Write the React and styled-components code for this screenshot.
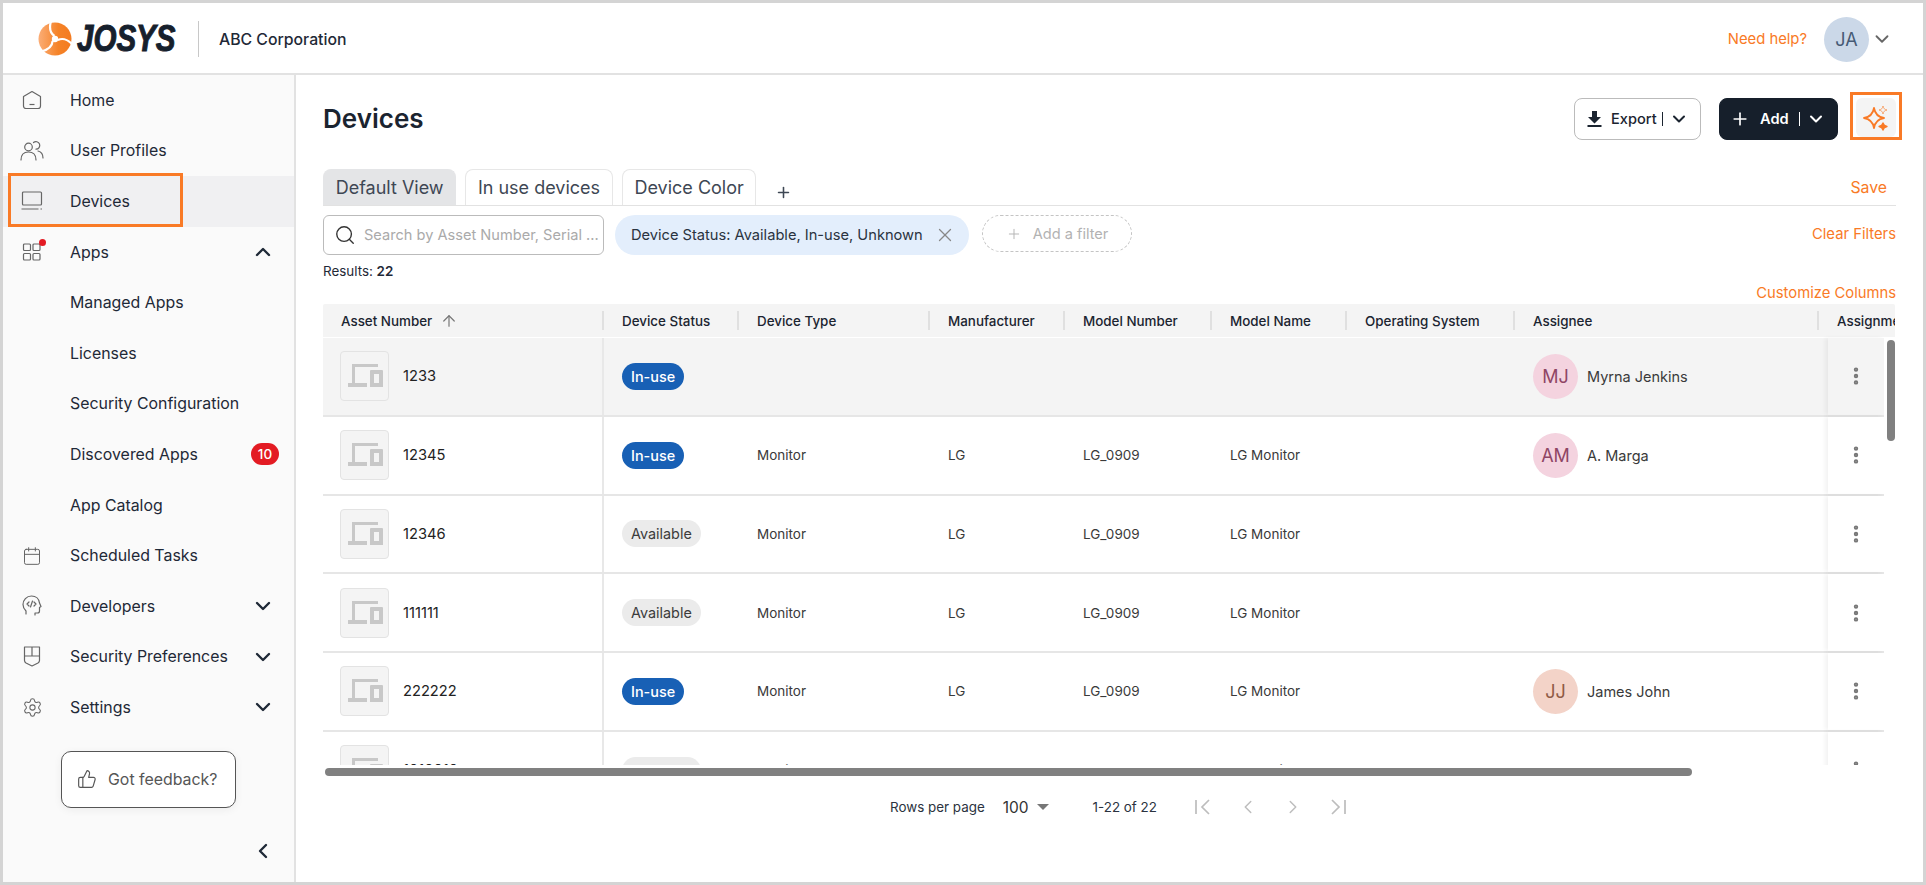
import React from 'react';
import styled, { createGlobalStyle } from 'styled-components';
import { ChevronDown, ChevronUp, ChevronLeft, ChevronRight, Plus, Search, X, ArrowUp, ThumbsUp, Settings, EllipsisVertical, Calendar } from 'lucide-react';

const Global = createGlobalStyle`
  *, *::before, *::after { box-sizing: border-box; }
  html, body { margin: 0; padding: 0; height: 885px; overflow: hidden; background: #fff; }
  body { font-family: Inter, "Noto Sans", sans-serif; color: #1f2937; }
`;
const ORANGE = '#f97a26';

const Frame = styled.div`
  width: 1926px; height: 885px; border: 3px solid #d4d4d4; display: flex; flex-direction: column; background: #fff; overflow: hidden;
`;
const Header = styled.header`
  height: 72px; flex: none; border-bottom: 2px solid #e2e2e2; display: flex; align-items: center; padding: 2px 30px 0 35px;
`;
const LogoMark = styled.svg` width: 34px; height: 34px; flex: none; `;
const LogoWordBox = styled.span` width: 105px; margin-left: 5px; display: block; `;
const LogoWord = styled.span`
  display: inline-block; font: italic 700 36px/1 "Liberation Sans", sans-serif; color: #16202c; -webkit-text-stroke: 1px #16202c;
  transform: scaleX(.82); transform-origin: left center;
`;
const HeaderRule = styled.span` width: 1px; height: 36px; background: #c8c8c8; margin: 0 20px 0 16px; `;
const Company = styled.span` font-size: 15.8px; font-weight: 500; color: #1f2937; `;
const Spacer = styled.div` flex: 1; `;
const Link = styled.a` font-size: ${p => p.$fs || 14.8}px; color: ${ORANGE}; white-space: nowrap; `;
const Circle = styled.div`
  width: 45px; height: 45px; border-radius: 50%; background: ${p => p.$bg}; color: ${p => p.$fg}; flex: none;
  display: flex; align-items: center; justify-content: center; font-size: 18px;
`;
const HeaderUser = styled.div` display: flex; align-items: center; gap: 2px; margin-left: 17px; color: #666; `;

const Body = styled.div` flex: 1; display: flex; min-height: 0; `;
const Side = styled.nav`
  width: 293px; flex: none; background: #fafafa; border-right: 2px solid #e2e2e2; display: flex; flex-direction: column; position: relative;
`;
const NavRow = styled.div`
  height: 50.6px; flex: none; display: flex; align-items: center; position: relative; font-size: 15.9px; color: #1f2937;
  padding: 0 19px 0 17px; background: ${p => p.$active ? '#f0f0f2' : 'transparent'};
  ${p => p.$active && `&::after { content: ''; position: absolute; left: 5px; top: -3px; width: 175px; height: 54px; border: 3px solid ${ORANGE}; }`}
`;
const NavIcon = styled.span` width: 24px; height: 24px; display: flex; align-items: center; justify-content: center; color: #666; margin-right: 26px; flex: none; position: relative; `;
const NavDot = styled.i` position: absolute; right: -2px; top: -1px; width: 7px; height: 7px; border-radius: 50%; background: #e31b23; `;
const NavLabel = styled.span` flex: 1; margin-left: ${p => p.$sub ? '50px' : 0}; white-space: nowrap; `;
const Count = styled.span` width: 28px; height: 22px; border-radius: 11px; background: #e31b23; color: #fff; font-size: 13.5px; font-weight: 500; display: flex; align-items: center; justify-content: center; margin-right: -4px; `;
const Chev = styled.span` color: #1f2937; display: flex; `;
const Feedback = styled.button`
  margin: 18px 0 0 58px; width: 175px; height: 57px; background: #fff; border: 1px solid #555; border-radius: 10px; box-shadow: 0 2px 8px rgba(0,0,0,.06);
  display: flex; align-items: center; gap: 11px; padding: 0 15px; font: 400 15.9px Inter, sans-serif; color: #565656; white-space: nowrap;
`;
const Collapse = styled.div` margin-top: auto; height: 50px; display: flex; justify-content: flex-end; padding: 10px 19px 0 0; color: #1f2937; margin-bottom: 3px; `;

const Main = styled.main` flex: 1; min-width: 0; display: flex; flex-direction: column; padding: 0 27px; position: relative; `;
const TitleRow = styled.div` height: 66px; margin-top: 16px; flex: none; display: flex; align-items: flex-start; `;
const Title = styled.h1` margin: 12px 0 0; font-size: 26px; font-weight: 600; color: #1b2430; `;
const Btn = styled.button`
  height: 42px; margin-top: 7px; border-radius: 8px; display: flex; align-items: center; font: 500 14.6px Inter, sans-serif;
  border: 1px solid ${p => p.$dark ? '#161f2b' : '#bbb'}; background: ${p => p.$dark ? '#161f2b' : '#fff'}; color: ${p => p.$dark ? '#fff' : '#1b2430'};
  width: ${p => p.$w}px; padding: 0 0 0 ${p => p.$pl}px; margin-left: ${p => p.$ml || 0}px; font-weight: ${p => p.$dark ? 600 : 500};
`;
const BtnIcon = styled.span` display: flex; margin-right: ${p => p.$mr}px; `;
const BtnBar = styled.i` width: 1px; height: 14px; background: ${p => p.$dark ? '#fff' : '#1b2430'}; margin: 0 6px 0 ${p => p.$gap}px; `;
const Outline = styled.div` border: 3px solid ${ORANGE}; margin-left: 12px; margin-right: -6px; margin-top: 1px; padding: 3px 3px 0; height: 48px; width: 52px; `;
const AiBtn = styled.div` width: 40px; height: 39px; border-radius: 6px; background: #f4f4f4; display: flex; align-items: center; justify-content: center; `;

const TabRow = styled.div` height: 37px; margin-top: 12px; flex: none; border-bottom: 1px solid #e2e2e2; display: flex; align-items: flex-end; gap: 9px; `;
const Tab = styled.div`
  height: 36px; padding: 0 11.7px; border: 1px solid ${p => p.$on ? '#e4e5e7' : '#e7e7e7'}; border-bottom: none; border-radius: 8px 8px 0 0; font-size: 18px; color: #3e4754;
  background: ${p => p.$on ? '#e4e5e7' : '#fff'}; display: flex; align-items: center; white-space: nowrap;
`;
const TabPlus = styled.span` margin: 0 0 4px 10px; display: flex; color: #3e4754; `;
const SaveLink = styled(Link)` margin-left: auto; margin-right: 9px; margin-bottom: 8px; `;
const FilterRow = styled.div` display: flex; align-items: flex-start; margin-top: 9px; height: 39px; flex: none; `;
const SearchBox = styled.div` width: 281px; height: 40px; border: 1px solid #bbb; border-radius: 6px; display: flex; align-items: center; padding: 0 0 0 10px; gap: 8px; color: #333; `;
const Placeholder = styled.span` font-size: 14.6px; color: #aaa; white-space: nowrap; overflow: hidden; `;
const Chip = styled.div` margin-left: 11px; width: 354px; height: 40px; border-radius: 20px; background: #e3eefc; display: flex; align-items: center; padding: 0 13px 0 16px; font-size: 14.65px; color: #2a3340; white-space: nowrap; justify-content: space-between; `;
const AddFilter = styled.div` margin-left: 13px; width: 150px; height: 37px; border: 1px dashed #c4c4c4; border-radius: 19px; display: flex; align-items: center; justify-content: center; gap: 11px; font-size: 14.6px; color: #b2b2b2; white-space: nowrap; `;
const ClearLink = styled(Link)` margin-left: auto; margin-top: 10px; `;
const Results = styled.div` font-size: 13.4px; margin-top: 9px; height: 18px; color: #1f2937; b { font-weight: 600; } `;
const CustomRow = styled.div` display: flex; justify-content: flex-end; height: 20px; margin-top: 2px; align-items: center; `;

const Table = styled.div` margin-top: 1px; position: relative; height: 461px; flex: none; overflow: hidden; `;
const Row = styled.div`
  display: grid; grid-template-columns: 281px 135px 191px 135px 147px 135px 168px 304px 1fr; width: 1561px;
  height: 78.75px; align-items: center; border-bottom: 2px solid #e6e6e6; background: ${p => p.$hl ? '#f4f4f4' : '#fff'}; position: relative;
`;
const HeadRow = styled(Row)` height: 33px; width: 1572px; border-bottom: none; background: #f4f4f4; margin-bottom: 1px; font-size: 13.4px; font-weight: 500; color: #1b2430; grid-template-columns: 281px 135px 191px 135px 147px 135px 168px 304px 76px; overflow: hidden; border-radius: 2px 2px 0 0; `;
const HeadCell = styled.div`
  padding-left: 18px; height: 100%; display: flex; align-items: center; gap: 8px; white-space: nowrap; position: relative;
  &::after { content: ''; position: absolute; right: 0; top: 7px; height: 19px; width: 2px; background: #e0e0e0; display: ${p => p.$last ? 'none' : 'block'}; }
`;
const Cell = styled.div` padding-left: 18px; font-size: 13.5px; color: #3a3a3a; display: flex; align-items: center; height: 100%; min-width: 0; white-space: nowrap; `;
const AssetCell = styled(Cell)` padding-left: 17px; gap: 14px; border-right: 2px solid #e8e8e8; color: #222; font-size: 14.7px; `;
const Thumb = styled.div` width: 49px; height: 50px; border: 1px solid #e3e3e3; background: #f4f4f4; border-radius: 4px; display: flex; align-items: center; justify-content: center; flex: none; `;
const Badge = styled.span` height: 27px; border-radius: 14px; padding: 0 9px; display: inline-flex; align-items: center; font-size: 14.4px; font-weight: ${p => p.$on ? 500 : 400}; background: ${p => p.$on ? '#1860b5' : '#ebebeb'}; color: ${p => p.$on ? '#fff' : '#3c3c3c'}; `;
const Person = styled.div` display: flex; align-items: center; gap: 9px; font-size: 14.5px; color: #3a3a3a; `;
const ActionCell = styled.div` position: absolute; right: 0; top: 0; bottom: 0; width: 56px; background: inherit; box-shadow: -3px 0 4px rgba(0,0,0,.05); display: flex; align-items: center; justify-content: center; color: #777; `;
const VBar = styled.div` position: absolute; right: 1px; top: 36px; width: 8px; height: 101px; background: #808080; border-radius: 4px; z-index: 2; `;
const HScroll = styled.div` height: 8px; width: 1367px; margin: 3px 0 0 2px; background: #808080; border-radius: 4px; flex: none; `;
const Pager = styled.div` display: flex; align-items: center; font-size: 13.4px; height: 24px; margin-top: 19px; padding-left: 567px; color: #2b3340; flex: none; `;
const PageSize = styled.span` font-size: 15.5px; margin-left: 18px; display: flex; align-items: center; gap: 8px; color: #333; `;
const Caret = styled.i` width: 0; height: 0; border: 6px solid transparent; border-top: 6px solid #777; border-bottom: none; `;
const PageRange = styled.span` margin-left: 44px; margin-right: 24px; `;
const PageBtn = styled.span` width: 45px; display: flex; justify-content: center; `;

const DeviceGlyph = () => (
  <svg width="36" height="26" viewBox="0 0 36 26" fill="#c8c8c8">
    <path d="M5 1h26v3H8v16h12v4H1v-4h4z" />
    <path fillRule="evenodd" d="M24 7h11a1 1 0 0 1 1 1v16h-13V8a1 1 0 0 1 1-1zm3 4v9h5v-9z" />
  </svg>
);
const Kebab = () => <EllipsisVertical size={22} strokeWidth={2.8} />;

const Sparkle = () => (
  <svg width="26" height="26" viewBox="0 0 26 26" fill="none" stroke={ORANGE} strokeWidth="1.8" strokeLinejoin="round">
    <path d="M11 3C12 9 15 12 21 13C15 14 12 17 11 23C10 17 7 14 1 13C7 12 10 9 11 3z" />
    <path d="M20 1C20.5 3.5 21.5 4.5 24 5C21.5 5.5 20.5 6.5 20 9C19.5 6.5 18.5 5.500 16 5C18.5 4.500 19.5 3.500 20 1z" strokeWidth="1" opacity=".6" />
    <path d="M20 18C20.5 20 21.5 21 24 21.500C21.5 22 20.5 23 20 25C19.500 23 18.500 22 16 21.500C18.500 21 19.500 20 20 18z" strokeWidth="1.300" fill={ORANGE} />
  </svg>
);
const ExportGlyph = () => (
  <svg width="15" height="16" viewBox="0 0 15 16" fill="#1b2430"><path d="M5 0h5v6h4l-6.500 6.500L1 6h4z" /><rect x="0.500" y="14" width="14" height="2" /></svg>
);
const FirstPage = () => <svg width="20" height="20" viewBox="0 0 20 20" fill="none" stroke="#bdbdbd" strokeWidth="1.700"><path d="M3 3v14M16 3l-7 7 7 7" /></svg>;
const LastPage = () => <svg width="20" height="20" viewBox="0 0 20 20" fill="none" stroke="#bdbdbd" strokeWidth="1.700"><path d="M17 3v14M4 3l7 7-7 7" /></svg>;

const HomeIcon = () => <svg width="20" height="20" viewBox="0 0 20 20" fill="none" stroke="#666" strokeWidth="1.200"><path d="M1.500 6.500 10 1.500l8.500 5V16a2.500 2.500 0 0 1-2.500 2.500H4A2.500 2.500 0 0 1 1.500 16z" strokeLinejoin="round" /><path d="M7.500 14.500h5" /></svg>;
const UsersIcon = () => <svg width="24" height="22" viewBox="0 0 24 22" fill="none" stroke="#666" strokeWidth="1.200" strokeLinecap="round"><circle cx="8.500" cy="7" r="3.800" /><path d="M1 20c0-5.500 3-8 7.500-8s7.500 2.500 7.500 8" /><path d="M13.500 2.500a3.800 3.800 0 1 1 2.500 6.700M18 11c3 .8 5 3.500 5 7" /></svg>;
const LaptopIcon = () => <svg width="22" height="20" viewBox="0 0 22 20" fill="none" stroke="#666" strokeWidth="1.200"><rect x="1.500" y="1" width="19" height="13" rx="1" /><path d="M.5 18h17M19.500 18h1.500" /></svg>;
const AppsIcon = () => <svg width="20" height="20" viewBox="0 0 20 20" fill="none" stroke="#666" strokeWidth="1.200"><rect x="1.500" y="2" width="7" height="6.500" rx="1" /><rect x="11" y="2" width="7" height="6.500" rx="1" /><rect x="1.500" y="11.500" width="7" height="6.500" rx="1" /><rect x="11" y="11.500" width="7" height="6.500" rx="1" /></svg>;
const DevIcon = () => <svg width="20" height="22" viewBox="0 0 20 22" fill="none" stroke="#666" strokeWidth="1.200" strokeLinecap="round" strokeLinejoin="round"><path d="M4 19v-3C2 14 1 12 1 9.500 1 5 4.500 1 9.500 1 14 1 17 4 17.500 8l1.500 3.500-1.500 1V16a2 2 0 0 1-2 2H13v2" /><path d="M7 7 5 9l2 2M12 7l2 2-2 2M10.500 6 8.500 12" /></svg>;
const ShieldIcon = () => <svg width="18" height="21" viewBox="0 0 18 21" fill="none" stroke="#666" strokeWidth="1.200" strokeLinejoin="round"><path d="M1.500 1h15v13.500c0 1-.5 1.800-1.500 2.500l-6 3-6-3c-1-.7-1.500-1.500-1.500-2.500z" /><path d="M9 1v9M1.500 10h15" /></svg>;

const NAV = [
  { l: 'Home', i: <HomeIcon /> },
  { l: 'User Profiles', i: <UsersIcon /> },
  { l: 'Devices', i: <LaptopIcon />, active: true },
  { l: 'Apps', i: <AppsIcon />, dot: true, c: 'up' },
  { l: 'Managed Apps', sub: true },
  { l: 'Licenses', sub: true },
  { l: 'Security Configuration', sub: true },
  { l: 'Discovered Apps', sub: true, n: 10 },
  { l: 'App Catalog', sub: true },
  { l: 'Scheduled Tasks', i: <Calendar size={20} strokeWidth={1.2} /> },
  { l: 'Developers', i: <DevIcon />, c: 'down' },
  { l: 'Security Preferences', i: <ShieldIcon />, c: 'down' },
  { l: 'Settings', i: <Settings size={21} strokeWidth={1.2} />, c: 'down' },
];

const HEADS = ['Device Status', 'Device Type', 'Manufacturer', 'Model Number', 'Model Name', 'Operating System', 'Assignee', 'Assignment'];
const ROWS = [
  { id: '1233', on: true, hl: true, p: ['MJ', 'Myrna Jenkins', '#f4d3df', '#8f4565'] },
  { id: '12345', on: true, lg: true, p: ['AM', 'A. Marga', '#f4d3df', '#8f4565'] },
  { id: '12346', lg: true },
  { id: '111111', lg: true },
  { id: '222222', on: true, lg: true, p: ['JJ', 'James John', '#f3d3c8', '#8f5a45'] },
  { id: '1010010', lg: true },
];
const BLADE = 'M16.500 14C12 11 11 6 13 -1';

export default function App() {
  return (
    <Frame>
      <Global />
      <Header>
        <LogoMark viewBox="0 0 34 34">
          <defs><linearGradient id="lg" x1="0" x2="1"><stop offset="0" stopColor="#fbad76" /><stop offset=".6" stopColor="#f58328" /><stop offset="1" stopColor="#f47b20" /></linearGradient></defs>
          <circle cx="17" cy="17" r="16.500" fill="url(#lg)" />
          <g fill="none" stroke="#fff" strokeWidth="2.200">
            <path d={BLADE} />
            <path d={BLADE} transform="rotate(120 17 17)" />
            <path d={BLADE} transform="rotate(240 17 17)" />
          </g>
          <circle cx="17" cy="17" r="3.200" fill="#fff" />
        </LogoMark>
        <LogoWordBox><LogoWord>JOSYS</LogoWord></LogoWordBox>
        <HeaderRule />
        <Company>ABC Corporation</Company>
        <Spacer />
        <Link>Need help?</Link>
        <HeaderUser>
          <Circle $bg="#cbd8e8" $fg="#465a75">JA</Circle>
          <ChevronDown size={22} strokeWidth={2} />
        </HeaderUser>
      </Header>
      <Body>
        <Side>
          {NAV.map(n => (
            <NavRow key={n.l} $active={n.active}>
              {n.i && <NavIcon>{n.i}{n.dot && <NavDot />}</NavIcon>}
              <NavLabel $sub={n.sub}>{n.l}</NavLabel>
              {n.n && <Count>{n.n}</Count>}
              {n.c && <Chev>{n.c === 'up' ? <ChevronUp size={24} strokeWidth={2.4} /> : <ChevronDown size={24} strokeWidth={2.4} />}</Chev>}
            </NavRow>
          ))}
          <Feedback><ThumbsUp size={20} strokeWidth={1.4} />Got feedback?</Feedback>
          <Collapse><ChevronLeft size={24} strokeWidth={2.4} /></Collapse>
        </Side>
        <Main>
          <TitleRow>
            <Title>Devices</Title>
            <Spacer />
            <Btn $w={127} $pl={12}><BtnIcon $mr={9}><ExportGlyph /></BtnIcon>Export<BtnBar $gap={5} /><ChevronDown size={20} strokeWidth={2.4} /></Btn>
            <Btn $dark $w={119} $pl={10} $ml={18}><BtnIcon $mr={10}><Plus size={20} strokeWidth={2} /></BtnIcon>Add<BtnBar $dark $gap={10} /><ChevronDown size={20} strokeWidth={2.4} /></Btn>
            <Outline><AiBtn><Sparkle /></AiBtn></Outline>
          </TitleRow>
          <TabRow>
            <Tab $on>Default View</Tab>
            <Tab>In use devices</Tab>
            <Tab>Device Color</Tab>
            <TabPlus><Plus size={17} strokeWidth={2.2} /></TabPlus>
            <SaveLink $fs={15.8}>Save</SaveLink>
          </TabRow>
          <FilterRow>
            <SearchBox><Search size={22} strokeWidth={1.5} /><Placeholder>Search by Asset Number, Serial ...</Placeholder></SearchBox>
            <Chip>Device Status: Available, In-use, Unknown<X size={22} strokeWidth={1.4} color="#888" /></Chip>
            <AddFilter><Plus size={16} strokeWidth={1.4} />Add a filter</AddFilter>
            <ClearLink>Clear Filters</ClearLink>
          </FilterRow>
          <Results>Results: <b>22</b></Results>
          <CustomRow><Link>Customize Columns</Link></CustomRow>
          <Table>
            <HeadRow>
              <HeadCell>Asset Number <ArrowUp size={18} strokeWidth={1.6} color="#777" /></HeadCell>
              {HEADS.map((h, i) => <HeadCell key={h} $last={i === HEADS.length - 1}>{h}</HeadCell>)}
            </HeadRow>
            {ROWS.map(r => (
              <Row key={r.id} $hl={r.hl}>
                <AssetCell><Thumb><DeviceGlyph /></Thumb>{r.id}</AssetCell>
                <Cell><Badge $on={r.on}>{r.on ? 'In-use' : 'Available'}</Badge></Cell>
                <Cell>{r.lg && 'Monitor'}</Cell>
                <Cell>{r.lg && 'LG'}</Cell>
                <Cell>{r.lg && 'LG_0909'}</Cell>
                <Cell>{r.lg && 'LG Monitor'}</Cell>
                <Cell />
                <Cell>{r.p && <Person><Circle $bg={r.p[2]} $fg={r.p[3]}>{r.p[0]}</Circle>{r.p[1]}</Person>}</Cell>
                <ActionCell><Kebab /></ActionCell>
              </Row>
            ))}
            <VBar />
          </Table>
          <HScroll />
          <Pager>
            Rows per page
            <PageSize>100 <Caret /></PageSize>
            <PageRange>1-22 of 22</PageRange>
            <PageBtn><FirstPage /></PageBtn>
            <PageBtn><ChevronLeft size={22} strokeWidth={1.6} color="#bdbdbd" /></PageBtn>
            <PageBtn><ChevronRight size={22} strokeWidth={1.6} color="#bdbdbd" /></PageBtn>
            <PageBtn><LastPage /></PageBtn>
          </Pager>
        </Main>
      </Body>
    </Frame>
  );
}
